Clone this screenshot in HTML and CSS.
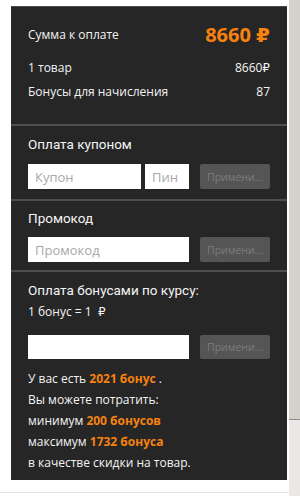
FILE: index.html
```html
<!DOCTYPE html>
<html lang="ru">
<head>
  <meta charset="UTF-8" />
  <meta name="viewport" content="width=device-width, initial-scale=1.0"/>
  <title>Оплата</title>
  <link rel="stylesheet" href="styles.css">
</head>
<body>
  <div class="page">
    <div class="main">
      <div class="panel">
        <div class="section totals">
          <div class="row sum-row">
            <span>Сумма к оплате</span>
            <span class="sum">8660 ₽</span>
          </div>
          <div class="row">
            <span>1 товар</span>
            <span>8660₽</span>
          </div>
          <div class="row">
            <span>Бонусы для начисления</span>
            <span>87</span>
          </div>
        </div>

        <div class="section">
          <div class="title">Оплата купоном</div>
          <div class="form">
            <input class="inp coupon" type="text" placeholder="Купон">
            <input class="inp pin" type="text" placeholder="Пин">
            <button class="apply">Примени...</button>
          </div>
        </div>

        <div class="section promo">
          <div class="title">Промокод</div>
          <div class="form">
            <input class="inp wide" type="text" placeholder="Промокод">
            <button class="apply">Примени...</button>
          </div>
        </div>

        <div class="section bonus">
          <div class="title">Оплата бонусами по курсу:</div>
          <div class="rate">1 бонус = 1 &nbsp;₽</div>
          <div class="form bonus-form">
            <input class="inp wide" type="text">
            <button class="apply">Примени...</button>
          </div>
          <div class="info">
            <p>У вас есть <b>2021 бонус</b> .</p>
            <p>Вы можете потратить:</p>
            <p>минимум <b>200 бонусов</b></p>
            <p>максимум <b>1732 бонуса</b></p>
            <p>в качестве скидки на товар.</p>
          </div>
        </div>
      </div>
      <div class="bottom-line"></div>
    </div>
    <div class="scrollbar">
      <div class="thumb"></div>
    </div>
  </div>
</body>
</html>
```

FILE: styles.css
```css
body {
  margin: 0;
  background: #fff;
  font-family: "Open Sans", "DejaVu Sans", sans-serif;
  font-size: 12px;
  color: #f4f4f4;
}
.page {
  display: flex;
  height: 496px;
  overflow: hidden;
}
.main {
  width: 289px;
  padding: 6px 0 0 11px;
  box-sizing: border-box;
}
.panel {
  width: 276px;
  background: #262626;
  border-top: 1px solid #4a4a4a;
}
.section {
  padding: 8px 17px 10px;
  border-bottom: 2px solid #4d4d4d;
}
.section:last-child {
  border-bottom: none;
}
.totals {
  padding: 12px 17px 21px;
}
.row {
  display: flex;
  justify-content: space-between;
  align-items: center;
  height: 24px;
}
.sum-row {
  height: 30px;
  margin-bottom: 6px;
}
.sum {
  color: #f7820f;
  font-size: 20px;
  font-weight: 700;
}
.title {
  font-family: Roboto, "Open Sans", sans-serif;
  font-size: 13.5px;
  line-height: 20px;
}
.form {
  display: flex;
  margin-top: 10px;
}
.promo {
  padding: 7px 17px 8px;
}
.promo .form {
  margin-top: 9px;
}
.inp {
  height: 25px;
  box-sizing: border-box;
  border: none;
  margin: 0;
  padding: 0 7px;
  font-family: inherit;
  font-size: 13px;
  background: #fff;
}
.inp::placeholder {
  color: #a8a8a8;
}
.coupon {
  width: 113px;
  margin-right: 4px;
}
.pin {
  width: 44px;
  margin-right: 11px;
}
.wide {
  width: 161px;
  margin-right: 11px;
}
.apply {
  width: 70px;
  height: 25px;
  border: none;
  border-radius: 2px;
  background: #555;
  color: #7d7d7d;
  font-family: inherit;
  font-size: 10.5px;
  padding: 0;
}
.bonus {
  padding: 8px 17px 7px;
}
.rate {
  line-height: 20px;
  margin-top: 2px;
}
.bonus-form {
  margin-top: 13px;
}
.bonus-form .inp {
  height: 24px;
}
.bonus-form .apply {
  height: 24px;
}
.info {
  margin-top: 9px;
}
.info p {
  margin: 0;
  line-height: 21px;
}
.info b {
  color: #f7820f;
}
.bottom-line {
  margin: 12px 0 0 -11px;
  border-top: 1px solid #e6e6e6;
}
.scrollbar {
  width: 11px;
  background: #e9e8e6;
}
.thumb {
  height: 420px;
  background: #d5d1cb;
  border-bottom: 1px solid #8f8d89;
  box-sizing: border-box;
}
```
